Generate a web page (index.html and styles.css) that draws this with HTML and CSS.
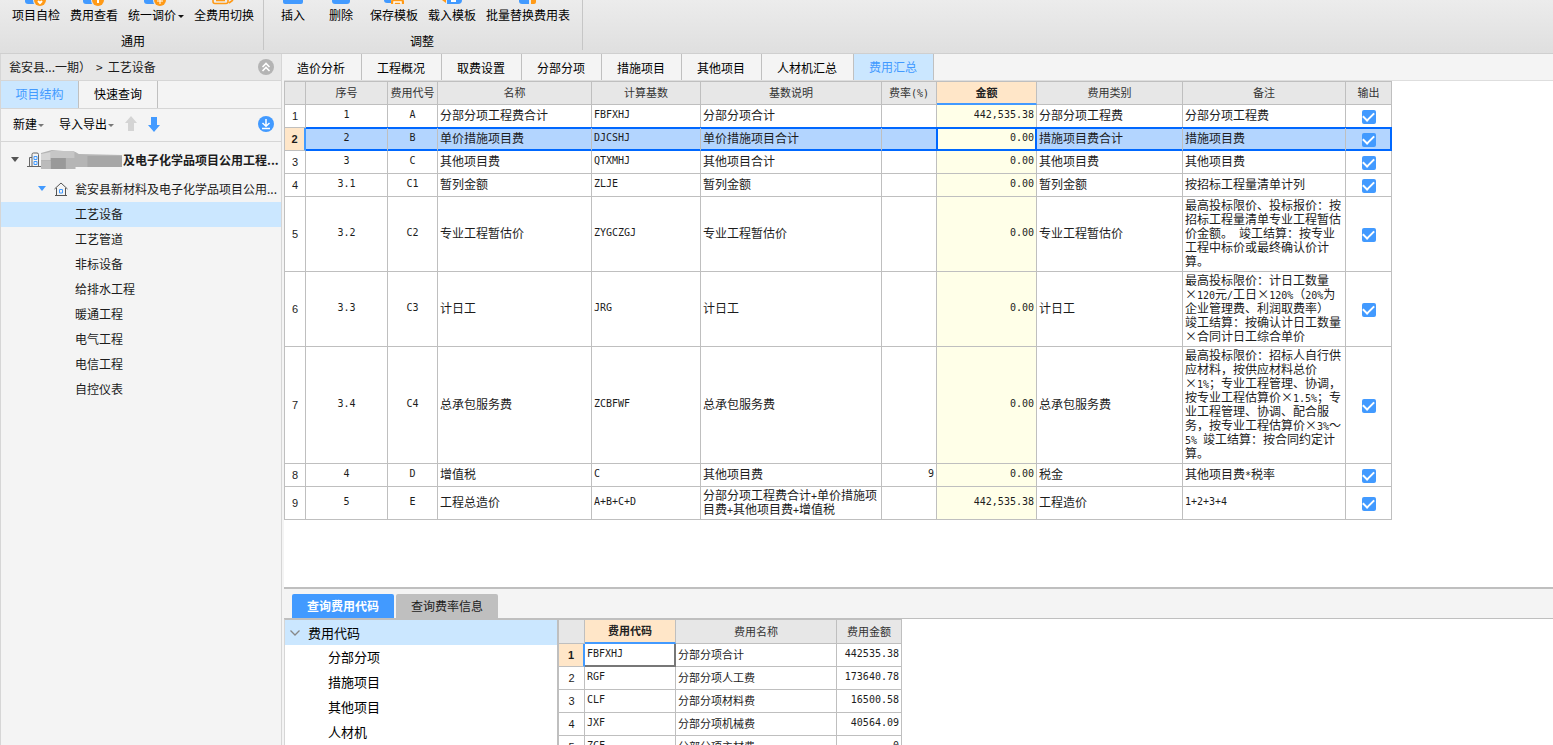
FILE: index.html
```html
<!DOCTYPE html>
<html lang="zh-CN">
<head>
<meta charset="utf-8">
<title>费用汇总</title>
<link rel="stylesheet" href="styles.css">
</head>
<body>
<header class="ribbon">
  <section class="group group-common">
    <div class="tools">
      <button class="tool"><svg class="tool-icon" width="34" height="7" viewBox="0 0 34 7"><path d="M6 0h14v4H9Q6 4 6 1z" fill="#429aff"/><circle cx="21" cy="0" r="7" fill="#e9e9e9"/><circle cx="21" cy="0" r="6" fill="#ff9a17"/><path d="M19 1l2 2 2-2" stroke="#fff" stroke-width="2" fill="none"/></svg>项目自检</button>
      <button class="tool"><svg class="tool-icon" width="34" height="7" viewBox="0 0 34 7"><path d="M6 0h14v4H9Q6 4 6 1z" fill="#429aff"/><circle cx="21" cy="0" r="7" fill="#e9e9e9"/><circle cx="21" cy="0" r="6" fill="#ff9a17"/><path d="M20 0h2v3h-2z" fill="#fff"/></svg>费用查看</button>
      <button class="tool"><svg class="tool-icon" width="34" height="7" viewBox="0 0 34 7"><path d="M5 0h14v4H8Q5 4 5 1z" fill="#429aff"/><circle cx="21" cy="0" r="7" fill="#e9e9e9"/><circle cx="21" cy="0" r="6" fill="#ff9a17"/><path d="M18 1h6M21 0v4" stroke="#fff" fill="none"/></svg><span>统一调价<i class="caret caret-dark"></i></span></button>
      <button class="tool"><svg class="tool-icon" width="34" height="7" viewBox="0 0 34 7"><path d="M6 0v1.500Q6 3.500 8 3.500H19Q21 3.500 21 1.500V0M9 .5h9M22 3l4-3" stroke="#ff9a17" stroke-width="1.600" fill="none"/></svg>全费用切换</button>
    </div>
    <h2 class="group-name">通用</h2>
  </section>
  <section class="group group-adjust">
    <div class="tools">
      <button class="tool"><svg class="tool-icon" width="34" height="7" viewBox="0 0 34 7"><path d="M7 0h20v2q0 2-2 2H9Q7 4 7 2z" fill="#429aff"/></svg>插入</button>
      <button class="tool"><svg class="tool-icon" width="34" height="7" viewBox="0 0 34 7"><path d="M8 0h18v1q0 3-3 3H11Q8 4 8 1z" fill="#429aff"/></svg>删除</button>
      <button class="tool"><svg class="tool-icon" width="34" height="7" viewBox="0 0 34 7"><path d="M7 0h7v3h-4Q7 3 7 0z" fill="#429aff"/><path d="M14 4V1q0-1 1-1h11q1 0 1 1v3z" fill="#ff9a17"/><path d="M17 4V2h7v2" stroke="#fff" stroke-width="1.500" fill="none"/></svg>保存模板</button>
      <button class="tool"><svg class="tool-icon" width="34" height="7" viewBox="0 0 34 7"><path d="M12 0h15q0 4-4 4H12z" fill="#429aff"/><path d="M7 0l4 3V0z" fill="#ff9a17"/><path d="M16 1h5" stroke="#fff" stroke-width="2"/></svg>载入模板</button>
      <button class="tool"><svg class="tool-icon" width="34" height="7" viewBox="0 0 34 7"><path d="M8 0h10v4h-7Q8 4 8 1z" fill="#429aff"/><path d="M20 0h5v2q0 2-2 2h-3z" fill="#ff9a17"/></svg>批量替换费用表</button>
    </div>
    <h2 class="group-name">调整</h2>
  </section>
</header>

<div class="workspace">
  <aside class="sidebar">
    <div class="crumbs"><span>瓮安县...一期）</span><span class="crumb-sep">&gt;</span><span>工艺设备</span>
      <button class="round" aria-label="收起"><svg width="16" height="16" viewBox="0 0 16 16"><circle cx="8" cy="8" r="8" fill="#b4b4b4"/><path d="M4.500 8L8 4.500 11.500 8M4.500 12L8 8.500 11.500 12" stroke="#fff" stroke-width="1.600" fill="none"/></svg></button>
    </div>
    <nav class="side-tabs"><button class="side-tab active">项目结构</button><button class="side-tab">快速查询</button></nav>
    <div class="side-tools">
      <button class="plain">新建<i class="caret"></i></button>
      <button class="plain">导入导出<i class="caret"></i></button>
      <button class="plain" aria-label="上移"><svg width="12" height="16" viewBox="0 0 12 16"><path d="M6 0l6 7H9v8H3V7H0z" fill="#d4d4d4"/></svg></button>
      <button class="plain" aria-label="下移"><svg width="12" height="16" viewBox="0 0 12 16"><path d="M6 16L0 9h3V1h6v8h3z" fill="#429aff"/></svg></button>
      <button class="round" aria-label="下载"><svg width="16" height="16" viewBox="0 0 16 16"><circle cx="8" cy="8" r="8" fill="#429aff"/><path d="M8 3v7M4.500 7L8 10.300 11.500 7M4 12.500h8" stroke="#fff" stroke-width="1.500" fill="none"/></svg></button>
    </div>
    <ul class="tree">
      <li class="node root"><svg width="8" height="5" viewBox="0 0 8 5"><path d="M0 0h8L4 5z" fill="#555"/></svg>
        <svg class="node-icon" width="14" height="16" viewBox="0 0 14 16"><path d="M0 14.500h14M2.500 14V5.500H5M5 14V2.500Q5 1 6.500 1h3.500q1.500 0 1.500 1.500V14" stroke="#666" fill="none"/><path d="M7 4.500h3v3H7zM7 9.500h3v3H7z" stroke="#429aff" fill="none"/></svg>
        <svg class="mask" width="82" height="20" viewBox="0 0 76 20" preserveAspectRatio="none"><path d="M0 3L10 0l22 2 3 2 40 1v12H32v2H0z" fill="#b5b5b5"/><path d="M0 4l9-2v8H0z" fill="#d5d5d5"/><path d="M9 1h22v7H9z" fill="#c6c6c6"/><path d="M9 8h14v11H9z" fill="#999"/><path d="M0 11h9v8H0z" fill="#bbb"/><path d="M43 6h32v11H43z" fill="#a7a7a7"/></svg><span class="label">及电子化学品项目公用工程...</span></li>
      <li class="node unit"><svg width="8" height="5" viewBox="0 0 8 5"><path d="M0 0h8L4 5z" fill="#429aff"/></svg>
        <svg class="node-icon" width="14" height="14" viewBox="0 0 14 14"><path d="M.5 7L7 1l6.500 6M2.500 6v7.500h9V6M1 13.500h12" stroke="#555" fill="none"/><path d="M5.500 7.500h3v3.500h-3z" stroke="#429aff" fill="none"/></svg><span class="label">瓮安县新材料及电子化学品项目公用...</span></li>
      <li class="node leaf active">工艺设备</li>
      <li class="node leaf">工艺管道</li>
      <li class="node leaf">非标设备</li>
      <li class="node leaf">给排水工程</li>
      <li class="node leaf">暖通工程</li>
      <li class="node leaf">电气工程</li>
      <li class="node leaf">电信工程</li>
      <li class="node leaf">自控仪表</li>
    </ul>
  </aside>

  <main class="main">
    <nav class="tabs">
      <button class="tab">造价分析</button><button class="tab">工程概况</button><button class="tab">取费设置</button><button class="tab">分部分项</button><button class="tab">措施项目</button><button class="tab">其他项目</button><button class="tab">人材机汇总</button><button class="tab active">费用汇总</button>
    </nav>
    <div class="sheet">
      <table class="grid fees">
        <colgroup><col class="w-no"><col class="w-seq"><col class="w-code"><col class="w-name"><col class="w-base"><col class="w-desc"><col class="w-rate"><col class="w-amount"><col class="w-kind"><col class="w-note"><col class="w-out"></colgroup>
        <thead><tr><th></th><th>序号</th><th>费用代号</th><th>名称</th><th>计算基数</th><th>基数说明</th><th>费率<span class="m">(%)</span></th><th class="current">金额</th><th>费用类别</th><th>备注</th><th>输出</th></tr></thead>
        <tbody>
          <tr><th>1</th><td class="c m">1</td><td class="c m">A</td><td>分部分项工程费合计</td><td class="m">FBFXHJ</td><td>分部分项合计</td><td></td><td class="amount m">442,535.38</td><td>分部分项工程费</td><td>分部分项工程费</td><td class="c"><input type="checkbox" aria-label="输出 1" checked></td></tr>
          <tr class="selected"><th>2</th><td class="c m">2</td><td class="c m">B</td><td>单价措施项目费</td><td class="m">DJCSHJ</td><td>单价措施项目合计</td><td></td><td class="amount m">0.00</td><td>措施项目费合计</td><td>措施项目费</td><td class="c"><input type="checkbox" aria-label="输出 2" checked></td></tr>
          <tr><th>3</th><td class="c m">3</td><td class="c m">C</td><td>其他项目费</td><td class="m">QTXMHJ</td><td>其他项目合计</td><td></td><td class="amount m">0.00</td><td>其他项目费</td><td>其他项目费</td><td class="c"><input type="checkbox" aria-label="输出 3" checked></td></tr>
          <tr><th>4</th><td class="c m">3.1</td><td class="c m">C1</td><td>暂列金额</td><td class="m">ZLJE</td><td>暂列金额</td><td></td><td class="amount m">0.00</td><td>暂列金额</td><td>按招标工程量清单计列</td><td class="c"><input type="checkbox" aria-label="输出 4" checked></td></tr>
          <tr><th>5</th><td class="c m">3.2</td><td class="c m">C2</td><td>专业工程暂估价</td><td class="m">ZYGCZGJ</td><td>专业工程暂估价</td><td></td><td class="amount m">0.00</td><td>专业工程暂估价</td><td>最高投标限价、投标报价：按<br>招标工程量清单专业工程暂估<br>价金额。<span class="m"> </span>竣工结算：按专业<br>工程中标价或最终确认价计<br>算。</td><td class="c"><input type="checkbox" aria-label="输出 5" checked></td></tr>
          <tr><th>6</th><td class="c m">3.3</td><td class="c m">C3</td><td>计日工</td><td class="m">JRG</td><td>计日工</td><td></td><td class="amount m">0.00</td><td>计日工</td><td>最高投标限价：计日工数量<br><span class="x">×</span><span class="m">120</span>元<span class="m">/</span>工日<span class="x">×</span><span class="m">120%</span>（<span class="m">20%</span>为<br>企业管理费、利润取费率）<br>竣工结算：按确认计日工数量<br><span class="x">×</span>合同计日工综合单价</td><td class="c"><input type="checkbox" aria-label="输出 6" checked></td></tr>
          <tr><th>7</th><td class="c m">3.4</td><td class="c m">C4</td><td>总承包服务费</td><td class="m">ZCBFWF</td><td>总承包服务费</td><td></td><td class="amount m">0.00</td><td>总承包服务费</td><td>最高投标限价：招标人自行供<br>应材料，按供应材料总价<br><span class="x">×</span><span class="m">1%</span>；专业工程管理、协调，<br>按专业工程估算价<span class="x">×</span><span class="m">1.5%</span>；专<br>业工程管理、协调、配合服<br>务，按专业工程估算价<span class="x">×</span><span class="m">3%</span>～<br><span class="m">5% </span>竣工结算：按合同约定计<br>算。</td><td class="c"><input type="checkbox" aria-label="输出 7" checked></td></tr>
          <tr><th>8</th><td class="c m">4</td><td class="c m">D</td><td>增值税</td><td class="m">C</td><td>其他项目费</td><td class="r m">9</td><td class="amount m">0.00</td><td>税金</td><td>其他项目费<span class="m">*</span>税率</td><td class="c"><input type="checkbox" aria-label="输出 8" checked></td></tr>
          <tr><th>9</th><td class="c m">5</td><td class="c m">E</td><td>工程总造价</td><td class="m">A+B+C+D</td><td>分部分项工程费合计<span class="m">+</span>单价措施项<br>目费<span class="m">+</span>其他项目费<span class="m">+</span>增值税</td><td></td><td class="amount m">442,535.38</td><td>工程造价</td><td class="m">1+2+3+4</td><td class="c"><input type="checkbox" aria-label="输出 9" checked></td></tr>
        </tbody>
      </table>
    </div>

    <section class="lookup">
      <nav class="lookup-tabs"><button class="lookup-tab active">查询费用代码</button><button class="lookup-tab">查询费率信息</button></nav>
      <div class="lookup-body">
        <ul class="categories">
          <li class="category head"><svg width="10" height="6" viewBox="0 0 10 6"><path d="M.5.5L5 5 9.500.5" stroke="#888" stroke-width="1.300" fill="none"/></svg>费用代码</li>
          <li class="category">分部分项</li><li class="category">措施项目</li><li class="category">其他项目</li><li class="category">人材机</li>
        </ul>
        <table class="grid codes">
          <colgroup><col class="w-num"><col class="w-key"><col class="w-title"><col class="w-sum"></colgroup>
          <thead><tr><th></th><th class="current">费用代码</th><th>费用名称</th><th>费用金额</th></tr></thead>
          <tbody>
            <tr class="focus"><th>1</th><td class="m">FBFXHJ</td><td>分部分项合计</td><td class="r m">442535.38</td></tr>
            <tr><th>2</th><td class="m">RGF</td><td>分部分项人工费</td><td class="r m">173640.78</td></tr>
            <tr><th>3</th><td class="m">CLF</td><td>分部分项材料费</td><td class="r m">16500.58</td></tr>
            <tr><th>4</th><td class="m">JXF</td><td>分部分项机械费</td><td class="r m">40564.09</td></tr>
            <tr><th>5</th><td class="m">ZCF</td><td>分部分项主材费</td><td class="r m">0</td></tr>
          </tbody>
        </table>
      </div>
    </section>
  </main>
</div>
</body>
</html>
```
FILE: styles.css
```css
* { box-sizing: border-box; }

body {
  margin: 0;
  height: 100vh;
  display: flex;
  flex-direction: column;
  overflow: hidden;
  background: #f4f4f4;
  color: #1c1c1c;
  font: 12px/16px "Noto Sans CJK SC", sans-serif;
}

button {
  border: 0;
  margin: 0;
  padding: 0;
  background: none;
  color: inherit;
  font: inherit;
  white-space: nowrap;
}

ul { list-style: none; margin: 0; padding: 0; }
svg { display: block; flex: none; }

.m { font-family: "DejaVu Sans Mono", monospace; font-size: 10px; }
span.m { line-height: 1; }

/* ribbon */
.ribbon {
  flex: none;
  display: flex;
  height: 54px;
  padding-bottom: 3px;
  background: linear-gradient(#ececec, #dfdfdf);
  border-bottom: 1px solid #cfcfcf;
  color: #000;
}
.group { border-right: 1px solid #c6c6c6; }
.group-common { padding: 0 4px 0 7px; }
.group-adjust { padding: 0 7px 0 5px; }
.tools { display: flex; }
.tool {
  display: flex;
  flex-direction: column;
  align-items: center;
  min-width: 48px;
  padding: 0 5px;
}
.group-name {
  margin: 10px 0 0;
  font-size: 12px;
  line-height: 16px;
  font-weight: 400;
  text-align: center;
}
.caret {
  display: inline-block;
  margin-left: 1px;
  border: 3px solid transparent;
  border-top-color: #777;
  border-bottom: 0;
  vertical-align: middle;
}
.caret-dark { margin-left: 2px; border-top-color: #111; }

.workspace { flex: 1; display: flex; min-height: 0; }

/* sidebar */
.sidebar {
  flex: none;
  width: 282px;
  border: 1px solid #d6d6d6;
  border-width: 0 1px;
}
.crumbs {
  display: flex;
  align-items: center;
  height: 27px;
  padding: 0 7px 0 8px;
  background: #e7e7e7;
  border-bottom: 1px solid #d6d6d6;
}
.crumb-sep { margin: 0 5px; }
.round { margin-left: auto; }
.side-tabs { display: flex; height: 27px; }
.side-tab { width: 79px; padding-bottom: 1px; border-right: 1px solid #c0c0c0; color: #000; }
.side-tab.active { width: 78px; background: #cbe7ff; color: #429aff; }
.side-tools {
  display: flex;
  align-items: center;
  gap: 11px;
  height: 34px;
  padding: 0 7px 2px 12px;
  border: 1px solid #d6d6d6;
  border-width: 1px 0;
  color: #000;
}
.side-tools .plain:first-child { margin-right: 4px; }
.tree { padding-top: 2px; }
.node { display: flex; align-items: center; height: 25px; padding-bottom: 2px; white-space: nowrap; }
.node-icon { margin: 0 7px 0 8px; }
.root { height: 31px; padding: 0 0 0 10px; font-weight: 700; }
.root .node-icon { margin-right: 0; }
.unit { height: 27px; padding: 0 0 0 37px; }
.leaf { padding-left: 74px; }
.leaf.active { background: #cbe7ff; }

/* main area */
.main {
  flex: 1;
  min-width: 0;
  display: flex;
  flex-direction: column;
  margin-left: 2px;
}
.tabs { flex: none; display: flex; height: 27px; border-bottom: 1px solid #dedede; }
.tab { padding: 2px 16px 0 15px; border-right: 1px solid #c0c0c0; color: #000; }
.tab:first-child { padding-left: 13px; }
.tab.active { padding-top: 0; background: #cbe7ff; color: #429aff; }
.sheet { flex: 1; min-height: 0; overflow: hidden; background: #fff; }

/* data grids */
.grid {
  flex: none;
  table-layout: fixed;
  border-collapse: separate;
  border-spacing: 0;
  line-height: 14px;
  background: #fff;
}
.grid th, .grid td {
  height: 23px;
  padding: 1px 2px 3px;
  border: 1px solid #bfbfbf;
  border-width: 0 1px 1px 0;
  text-align: left;
  vertical-align: middle;
  white-space: nowrap;
  overflow: hidden;
}
.grid thead th {
  height: 24px;
  padding: 0 0 2px;
  border-top-width: 1px;
  background: #e7e7e7;
  color: #333;
  font-size: 11px;
  font-weight: 400;
  text-align: center;
}
.grid tbody th {
  padding: 2px 0;
  font: 11px/14px "Liberation Sans", sans-serif;
  text-align: center;
}
.grid .c { text-align: center; }
.grid .r { text-align: right; }
.grid thead .current {
  background: #ffe6c8;
  border-bottom: 2px solid #429aff;
  color: #222;
  font-weight: 700;
}
.x { display: inline-block; width: 12px; line-height: 12px; text-align: center; }

.fees { width: 1108px; }
.fees th:first-child { border-left-width: 1px; }
.w-no { width: 22px; }
.w-seq { width: 82px; }
.w-code { width: 50px; }
.w-name { width: 154px; }
.w-base { width: 109px; }
.w-desc { width: 181px; }
.w-rate { width: 55px; }
.w-amount { width: 100px; }
.w-kind { width: 146px; }
.w-note { width: 163px; }
.w-out { width: 46px; }
.grid .amount { background: #ffffe8; text-align: right; }

.fees .selected td {
  background: #b3d5ff;
  border-bottom-color: #0068ff;
  box-shadow: 0 -1px #0068ff, inset 0 1px #0068ff, inset 0 -1px #0068ff;
}
.fees .selected .amount {
  background: #ffffe8;
  border-right-color: #0068ff;
  box-shadow: 0 -1px #0068ff, -1px 0 #0068ff, inset 0 0 0 1px #0068ff;
}
.fees .selected td:last-child {
  border-right-color: #0068ff;
  box-shadow: 0 -1px #0068ff, inset -1px 1px #0068ff, inset 0 -1px #0068ff;
}
.fees .selected th, .codes .focus th {
  background: #ffe6c8;
  border-right: 2px solid #429aff;
  font-weight: 700;
}

input[type="checkbox"] {
  appearance: none;
  display: grid;
  place-items: center;
  width: 14px;
  height: 14px;
  margin: 1px auto 0;
  border-radius: 2px;
  background: #429aff;
}
.grid td:has(input) { padding: 2px; }
input[type="checkbox"]:checked::before {
  content: "";
  width: 9px;
  height: 5px;
  margin-bottom: 3px;
  border: solid #fff;
  border-width: 0 0 2px 2px;
  transform: rotate(-45deg);
}

/* code lookup */
.lookup {
  flex: none;
  height: 158px;
  display: flex;
  flex-direction: column;
  border-top: 2px solid #bfbfbf;
}
.lookup-tabs {
  flex: none;
  display: flex;
  gap: 2px;
  padding: 5px 8px 0;
  border-bottom: 1px solid #bfbfbf;
}
.lookup-tab {
  width: 102px;
  height: 24px;
  border-radius: 2px 2px 0 0;
  background: #bfbfbf;
}
.lookup-tab.active { background: #429aff; color: #fff; font-weight: 700; }
.lookup-body { flex: 1; min-height: 0; display: flex; overflow: hidden; background: #fff; }
.categories {
  flex: none;
  width: 274px;
  border: 1px solid #bfbfbf;
  border-left-color: #d6d6d6;
  border-bottom: 0;
  color: #000;
  font-size: 13px;
}
.category { height: 25px; padding-left: 43px; line-height: 24px; }
.category.head {
  display: flex;
  align-items: center;
  gap: 8px;
  padding-left: 5px;
  background: #cbe7ff;
}
.codes { align-self: flex-start; width: 344px; font-size: 11px; }
.codes th:first-child { border-left-width: 1px; }
.codes thead th { height: 25px; }
.w-num { width: 27px; }
.w-key { width: 91px; }
.w-title { width: 161px; }
.w-sum { width: 65px; }
.codes .focus td:nth-child(2) { box-shadow: inset -1px -1px #777; border-color: #777; }
```
